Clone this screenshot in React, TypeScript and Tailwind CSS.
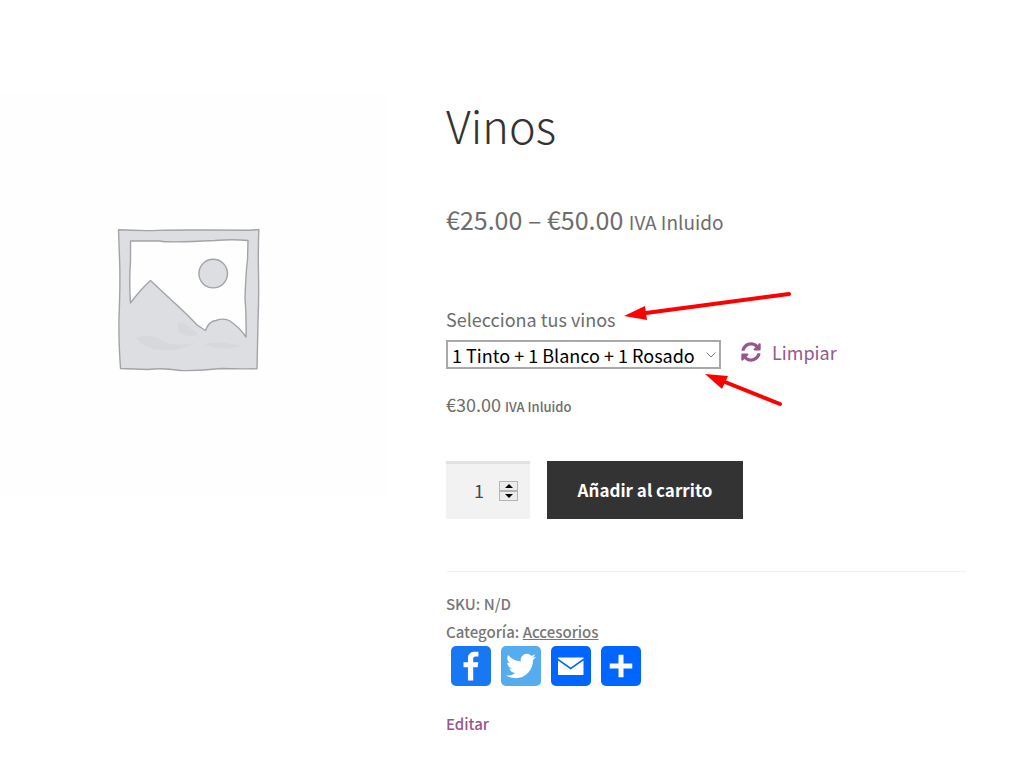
import { useState } from 'react';
import { FaSyncAlt } from 'react-icons/fa';

const wines = ['1 Tinto + 1 Blanco + 1 Rosado', '3 Tintos', '3 Blancos', '3 Rosados'];

function PlaceholderImage() {
    return (
        <svg viewBox="0 0 180 180" className="w-[180px] h-[180px]" role="img" aria-label="Imagen del producto">
            <g fill="#dddee2" stroke="#a3a4a8" strokeWidth="1.4" strokeLinejoin="round">
                <path
                    fillRule="evenodd"
                    d="M18.5 19.8 Q40 21 58 20.4 T102 20 T150 20.3 L158.8 19.5 Q158 42 158.5 64 T158 112 L157 158.8 Q136 159 121 158.5 Q100 161 81 160.5 Q62 157.5 48 159.5 L20.5 158.5 Q18.5 130 19 108 Q20.5 70 19.5 48 Z
                    M30.5 31 L30.5 50 Q29 72 30.5 93 Q40 80 50.5 70.5 L67 86 Q88 105 97 115 L105.5 120.5 Q109 111 116 110.5 Q124 107.5 130 111 Q140 118 146 127 Q146.5 105 145 88 Q146 60 147.5 50 L148 30.5 Q133 29 115 30.5 Q70 33 60 31 Z"
                />
                <circle cx="113.2" cy="63.6" r="14.3" />
            </g>
            <g fill="#cfd1d5" opacity="0.45">
                <path d="M78 112 Q88 114 98 124 Q90 129 78 122 Z" />
                <path d="M36 128 Q50 122 64 132 Q78 138 96 132 Q80 142 62 140 Q46 140 36 128 Z" />
                <path d="M104 134 Q120 130 140 136 Q124 142 104 134 Z" />
            </g>
        </svg>
    );
}

function Arrows() {
    return (
        <svg
            viewBox="0 0 400 130"
            className="absolute left-0 top-[-15px] w-[400px] h-[130px] pointer-events-none"
            fill="#ff0000"
            stroke="#ff0000"
            strokeLinecap="round"
            aria-hidden="true"
        >
            <path d="M343 4 L200 23" strokeWidth="4" />
            <path d="M178 26 L199 16 L201 30 Z" stroke="none" />
            <path d="M334 114 L279 92" strokeWidth="4" />
            <path d="M259 84 L282 86 L276 99 Z" stroke="none" />
        </svg>
    );
}

function ShareLinks() {
    return (
        <div className="flex gap-[10px] pl-[5px]">
            <a href="#facebook" aria-label="Facebook">
                <svg viewBox="0 0 32 32" className="w-10 h-10 rounded-[5px] bg-[#1877f2]" fill="#fff">
                    <path d="M17.78 27.5V17.008h3.522l.527-4.09h-4.05v-2.61c0-1.182.33-1.99 2.023-1.99h2.166V4.66c-.375-.05-1.66-.16-3.155-.16-3.123 0-5.26 1.905-5.26 5.405v3.016h-3.53v4.09h3.53V27.5h4.223z" />
                </svg>
            </a>
            <a href="#twitter" aria-label="Twitter">
                <svg viewBox="0 0 32 32" className="w-10 h-10 rounded-[5px] bg-[#55acee]" fill="#fff">
                    <path d="M28 8.557a9.913 9.913 0 0 1-2.828.775 4.93 4.93 0 0 0 2.166-2.725 9.738 9.738 0 0 1-3.13 1.194 4.92 4.92 0 0 0-3.593-1.55 4.924 4.924 0 0 0-4.794 6.049c-4.09-.21-7.72-2.17-10.15-5.15a4.942 4.942 0 0 0-.665 2.477c0 1.71.87 3.214 2.19 4.1a4.968 4.968 0 0 1-2.23-.616v.06c0 2.39 1.7 4.38 3.952 4.83-.414.115-.85.174-1.297.174-.318 0-.626-.03-.928-.086a4.935 4.935 0 0 0 4.6 3.42 9.893 9.893 0 0 1-6.114 2.107c-.398 0-.79-.023-1.175-.068a13.953 13.953 0 0 0 7.55 2.213c9.056 0 14.01-7.507 14.01-14.013 0-.213-.005-.426-.015-.637.96-.695 1.795-1.56 2.455-2.55z" />
                </svg>
            </a>
            <a href="#email" aria-label="Email">
                <svg viewBox="0 0 40 40" className="w-10 h-10 rounded-[5px] bg-[#0166ff]" fill="#fff">
                    <path d="M7 11.5h25.5v1L19.7 21.5 7 12.5z" />
                    <path d="M7 14.5l12.7 9 12.8-9v13.8a.7.7 0 0 1-.7.7H7.7a.7.7 0 0 1-.7-.7z" />
                </svg>
            </a>
            <a href="#share" aria-label="Compartir">
                <svg viewBox="0 0 32 32" className="w-10 h-10 rounded-[5px] bg-[#0166ff]" fill="#fff">
                    <path d="M14 7h4v18h-4z" />
                    <path d="M7 14h18v4H7z" />
                </svg>
            </a>
        </div>
    );
}

export default function App() {
    const [wine, setWine] = useState(wines[0]);
    const [quantity, setQuantity] = useState(1);

    return (
        <main className="grid grid-cols-[386fr_520fr] items-start gap-x-[60px] pr-[46px] pt-[94px] pb-8 bg-white font-['Noto_Sans_CJK_SC',sans-serif] text-[#6d6d6d]">
            <div className="flex h-[402px] items-center justify-center bg-[#fefefe] pt-[10px] pr-[6px]">
                <PlaceholderImage />
            </div>

            <div>
                <h1 className="text-[45px] leading-[62px] font-light text-[#333333]">Vinos</h1>
                <p className="mt-[43px] text-[25px] leading-10">
                    €25.00 – €50.00 <small className="text-[19px]">IVA Inluido</small>
                </p>

                <form className="relative mt-[63px]" onSubmit={(e) => e.preventDefault()}>
                    <label htmlFor="wine" className="block text-[18px] leading-7">
                        Selecciona tus vinos
                    </label>
                    <div className="mt-[7px] flex items-start">
                        <div className="relative">
                            <select
                                id="wine"
                                value={wine}
                                onChange={(e) => setWine(e.target.value)}
                                className="block w-[275px] h-[29px] appearance-none border-2 border-[#a9a9a9] bg-white pl-1 text-[18px] leading-6 text-black"
                            >
                                {wines.map((name) => (
                                    <option key={name}>{name}</option>
                                ))}
                            </select>
                            <svg
                                viewBox="0 0 10 6"
                                className="absolute right-[5px] top-3 w-[10px] h-[6px] pointer-events-none"
                                fill="none"
                                stroke="#777"
                            >
                                <path d="M0.5 0.5 L5 5 L9.5 0.5" />
                            </svg>
                        </div>
                        <a href="#limpiar" className="ml-5 flex items-center gap-[11px] text-[18px] leading-6 text-[#96588a]">
                            <FaSyncAlt className="w-5 h-5" />
                            Limpiar
                        </a>
                    </div>

                    <p className="mt-[21px] text-[18px] leading-7">
                        €30.00 <small className="text-[13px] font-medium">IVA Inluido</small>
                    </p>

                    <div className="mt-10 flex gap-[17px]">
                        <div className="relative">
                            <input
                                type="number"
                                aria-label="Cantidad"
                                min={1}
                                value={quantity}
                                onChange={(e) => setQuantity(Number(e.target.value))}
                                className="block w-[84px] h-[58px] border-t-[3px] border-[#e2e2e2] bg-[#f2f2f2] pr-[46px] pb-1 text-right text-[18px] text-[#43454b] [appearance:textfield] [&::-webkit-inner-spin-button]:appearance-none"
                            />
                            <div className="absolute right-3 top-5 flex flex-col">
                                <button
                                    type="button"
                                    aria-label="Aumentar"
                                    onClick={() => setQuantity(quantity + 1)}
                                    className="flex h-[10px] w-[19px] items-center justify-center border border-[#b5b5b5] bg-[#ececec]"
                                >
                                    <svg viewBox="0 0 8 4" className="w-2 h-1">
                                        <path d="M0 4 L4 0 L8 4 Z" />
                                    </svg>
                                </button>
                                <button
                                    type="button"
                                    aria-label="Disminuir"
                                    onClick={() => setQuantity(Math.max(1, quantity - 1))}
                                    className="flex h-[10px] w-[19px] items-center justify-center border border-[#b5b5b5] bg-[#ececec]"
                                >
                                    <svg viewBox="0 0 8 4" className="w-2 h-1">
                                        <path d="M0 0 L4 4 L8 0 Z" />
                                    </svg>
                                </button>
                            </div>
                        </div>
                        <button type="submit" className="h-[58px] w-[196px] bg-[#333333] text-[17px] font-bold text-white">
                            Añadir al carrito
                        </button>
                    </div>
                    <Arrows />
                </form>

                <div className="mt-[52px] border-t border-[#f2f2f2] pt-[18px] text-[15px] leading-7 font-medium text-[#777777]">
                    <p>SKU: N/D</p>
                    <p>
                        Categoría:{' '}
                        <a href="#accesorios" className="underline">
                            Accesorios
                        </a>
                    </p>
                    <ShareLinks />
                    <a href="#editar" className="mt-6 inline-block text-[#96588a]">
                        Editar
                    </a>
                </div>
            </div>
        </main>
    );
}
